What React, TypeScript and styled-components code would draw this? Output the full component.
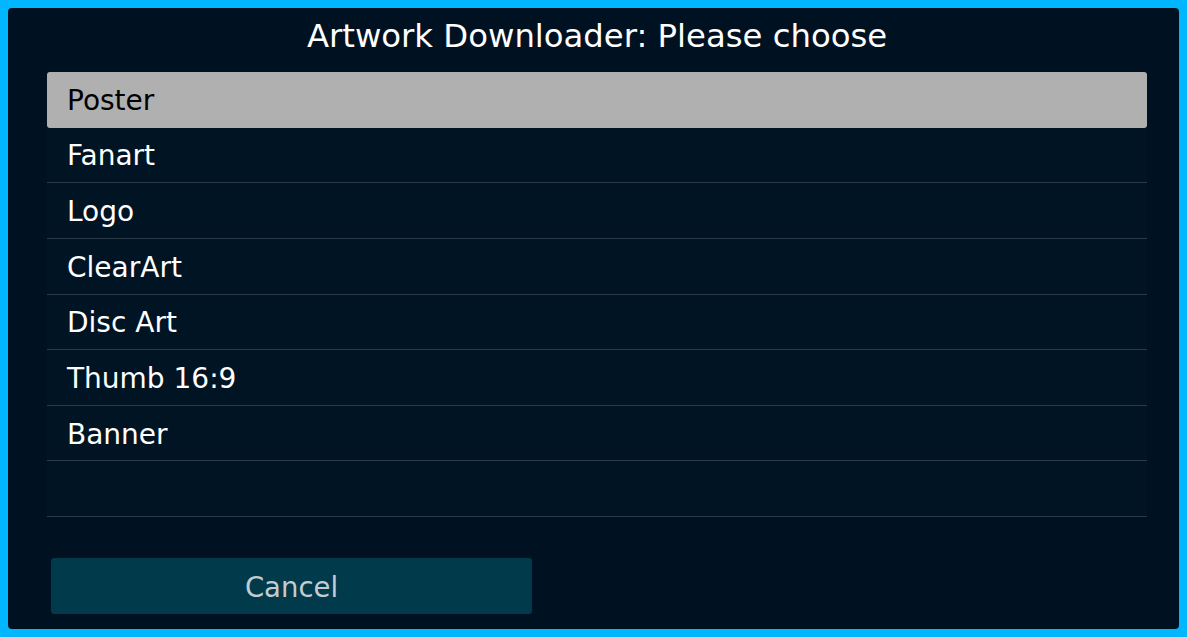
import React from "react"
import styled, { createGlobalStyle } from "styled-components"

const GlobalStyle = createGlobalStyle`
    html, body {
        margin: 0;
        padding: 0;
        background: #00b7ff;
    }
    body {
        font-family: "DejaVu Sans", "Liberation Sans", sans-serif;
    }
`
const Screen = styled.div`
    width: 1187px;
    height: 637px;
    box-sizing: border-box;
    padding: 8px;
    background: #00b7ff;
`
const Dialog = styled.section`
    width: 100%;
    height: 621px;
    box-sizing: border-box;
    background: #001222;
    border-radius: 4px;
    display: flex;
    flex-direction: column;
    padding: 0 32px 0 39px;
`
const Title = styled.h1`
    margin: 0;
    height: 64px;
    box-sizing: border-box;
    padding: 0 0 8px 0;
    display: flex;
    align-items: center;
    justify-content: center;
    font-size: 32.3px;
    font-weight: normal;
    color: #ffffff;
`
const List = styled.ul`
    list-style: none;
    margin: 0;
    padding: 0;
    display: flex;
    flex-direction: column;
`
const Row = styled.li<{ $selected?: boolean }>`
    height: 55.625px;
    box-sizing: border-box;
    display: flex;
    align-items: center;
    padding: 2px 0 0 20px;
    font-size: 28px;
    color: ${p => (p.$selected ? "#000000" : "#ffffff")};
    background: ${p => (p.$selected ? "#b0b0b0" : "#011423")};
    border-radius: ${p => (p.$selected ? "3px" : "0")};
    border-bottom: 1px solid ${p => (p.$selected ? "transparent" : "#2b3a47")};
`
const Footer = styled.div`
    flex: 1;
    display: flex;
    align-items: flex-end;
    padding: 0 0 15px 4px;
`
const CancelButton = styled.button`
    width: 481px;
    height: 56px;
    border: none;
    border-radius: 3px;
    background: #003a4b;
    color: #c3ccd0;
    font-family: "DejaVu Sans", "Liberation Sans", sans-serif;
    font-size: 27.5px;
    padding-top: 2px;
`

const items = ["Poster", "Fanart", "Logo", "ClearArt", "Disc Art", "Thumb 16:9", "Banner", ""]

export default function App() {
    return (
        <Screen>
            <GlobalStyle />
            <Dialog>
                <Title>Artwork Downloader: Please choose</Title>
                <List>
                    {items.map((item, i) => (
                        <Row key={i} $selected={i === 0}>{item}</Row>
                    ))}
                </List>
                <Footer>
                    <CancelButton>Cancel</CancelButton>
                </Footer>
            </Dialog>
        </Screen>
    )
}
